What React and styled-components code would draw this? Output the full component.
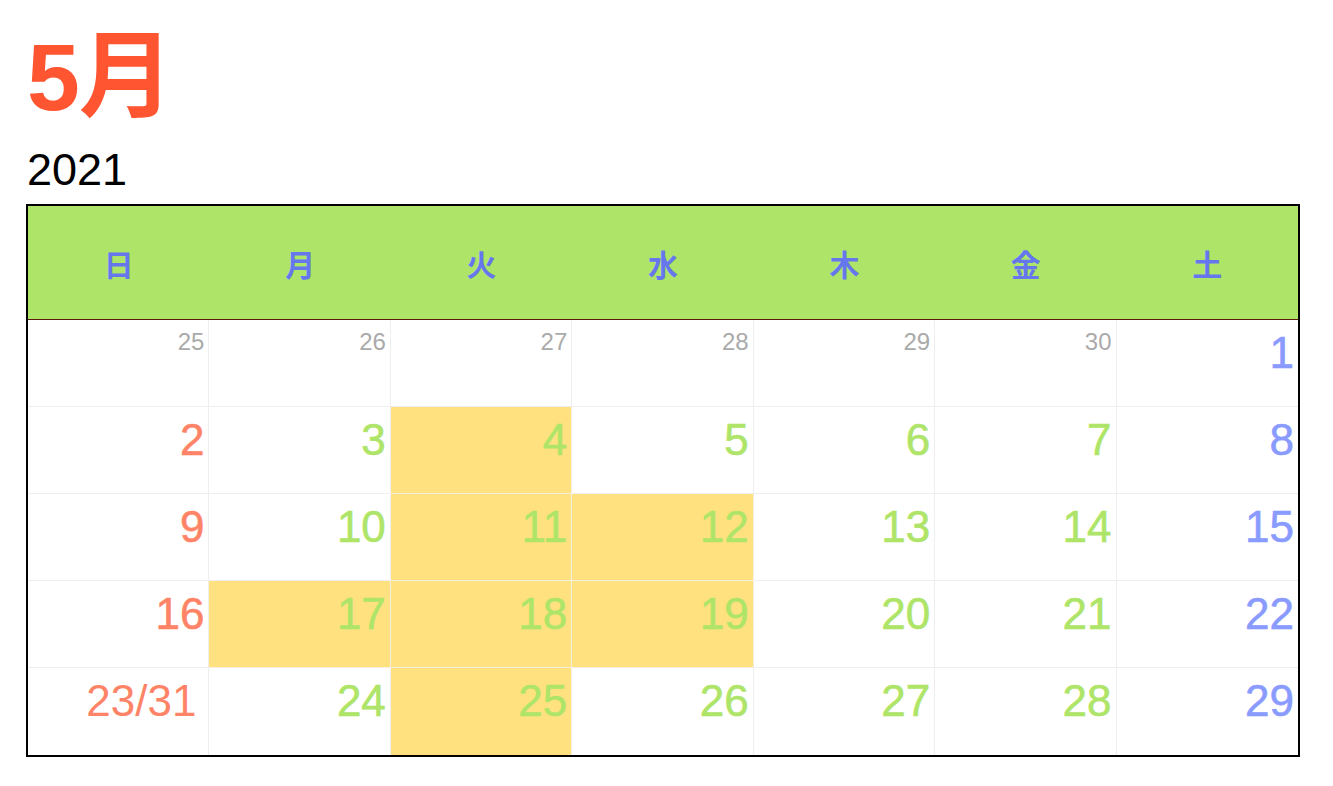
import React from "react"
import styled, { createGlobalStyle } from "styled-components"

const GlobalStyle = createGlobalStyle`
  body {
    margin: 0;
    background: #fff;
    font-family: "Liberation Sans", "Noto Sans CJK JP", sans-serif;
  }
`

const Page = styled.div`
  padding: 22px 33px 0 26px;
`

const Month = styled.h1`
  margin: 0 0 0 1px;
  font-size: 95px;
  line-height: 110px;
  font-weight: 700;
  color: #ff5530;
  letter-spacing: -1px;
`

const Year = styled.div`
  margin: 13px 0 9px 1px;
  font-size: 45px;
  line-height: 50px;
  color: #000;
  font-weight: 300;
`

const Calendar = styled.div`
  border: 2px solid #000;
  display: grid;
  grid-template-columns: repeat(7, 1fr);
`

const HeadCell = styled.div`
  height: 113px;
  background: #aee569;
  border-bottom: 1px solid #5c1a0a;
  display: flex;
  align-items: center;
  justify-content: center;
  color: #6677ee;
  font-size: 30px;
  font-weight: 700;
  font-family: "Noto Sans CJK JP", sans-serif;
`

const colors = {
  sun: "#ff8467",
  week: "#aee569",
  sat: "#8a9bff",
  prev: "#aaaaaa",
}

const Cell = styled.div`
  height: 87px;
  box-sizing: border-box;
  padding: 8px ${({ $wide }) => ($wide ? 12 : 4)}px 0 0;
  text-align: right;
  background: ${({ $hl }) => ($hl ? "#ffe180" : "#fff")};
  border-right: 1px solid ${({ $hl }) => ($hl ? "#f4f0e0" : "#eeeeee")};
  border-bottom: 1px solid ${({ $hl }) => ($hl ? "#f4f0e0" : "#eeeeee")};
  &:nth-child(7n) {
    border-right: none;
  }
  &:nth-last-child(-n + 7) {
    border-bottom: none;
  }
  color: ${({ $kind }) => colors[$kind]};
  font-size: ${({ $kind }) => ($kind === "prev" ? "24px" : "44px")};
  line-height: ${({ $kind }) => ($kind === "prev" ? "28px" : "50px")};
  -webkit-text-stroke: ${({ $kind, $wide }) =>
    $kind === "prev" || $wide ? "0" : "0.6px"};
`

const heads = ["日", "月", "火", "水", "木", "金", "土"]

const weeks = [
  ["25", "26", "27", "28", "29", "30", "1"],
  ["2", "3", "4", "5", "6", "7", "8"],
  ["9", "10", "11", "12", "13", "14", "15"],
  ["16", "17", "18", "19", "20", "21", "22"],
  ["23/31", "24", "25", "26", "27", "28", "29"],
]

const highlighted = ["1-2", "2-2", "2-3", "3-1", "3-2", "3-3", "4-2"]

const kindOf = (r, c) => {
  if (r === 0 && c < 6) return "prev"
  if (c === 0) return "sun"
  if (c === 6) return "sat"
  return "week"
}

const App = () => (
  <Page>
    <GlobalStyle />
    <Month>5月</Month>
    <Year>2021</Year>
    <Calendar>
      {heads.map((h) => (
        <HeadCell key={h}>{h}</HeadCell>
      ))}
      {weeks.map((week, r) =>
        week.map((d, c) => (
          <Cell
            key={r + "-" + c}
            $kind={kindOf(r, c)}
            $hl={highlighted.includes(r + "-" + c)}
            $wide={d.includes("/")}
          >
            {d}
          </Cell>
        ))
      )}
    </Calendar>
  </Page>
)

export default App
